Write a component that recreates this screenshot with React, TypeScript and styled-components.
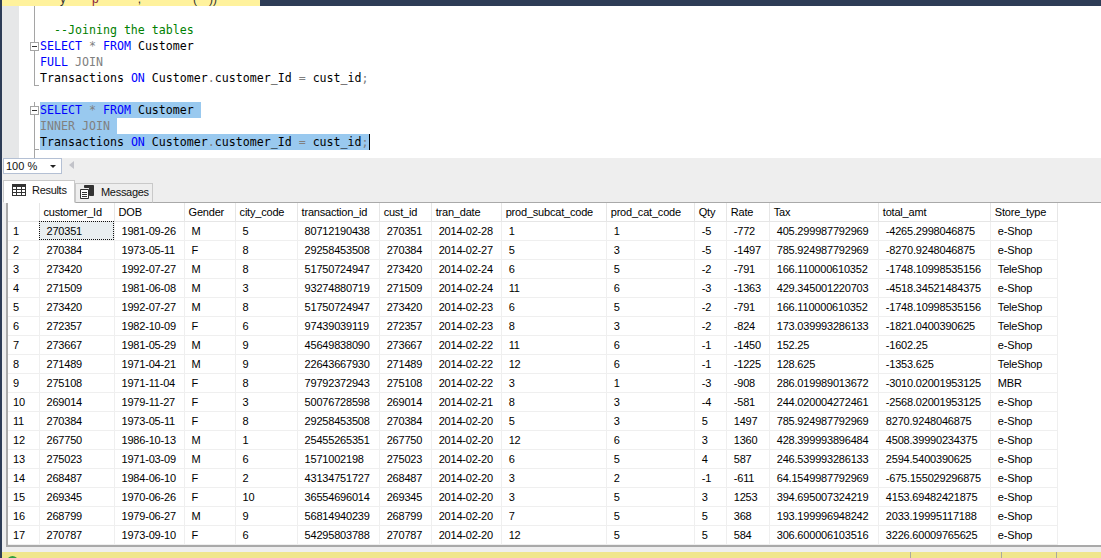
import React from 'react';
import styled, { createGlobalStyle } from 'styled-components';

const GlobalStyle = createGlobalStyle`
  html, body {
    margin: 0;
    padding: 0;
    overflow: hidden;
    background: #eeeeee;
  }
`;

const Page = styled.div`
  width: 1101px;
  height: 558px;
  display: flex;
  flex-direction: column;
  overflow: hidden;
  box-sizing: border-box;
  border-left: 2px solid #2d3c56;
  background: #eeeeee;
`;

const TitleStrip = styled.div`
  height: 6px;
  flex-shrink: 0;
  margin-left: -2px;
  display: flex;
  background: #2d3c56;
`;

const TitleTab = styled.div`
  width: 260px;
  height: 6px;
  overflow: hidden;
  background: #fff29d;
  display: flex;
  font: 12px/12px 'Liberation Sans', sans-serif;
  color: #333;
`;

const TitleGlyph = styled.span<{ $left: number; $color?: string }>`
  margin-left: ${p => p.$left}px;
  margin-top: -7px;
  color: ${p => p.$color || '#333'};
`;

const Editor = styled.div`
  height: 152px;
  flex-shrink: 0;
  display: flex;
  background: white;
`;

const Gutter = styled.div`
  width: 17px;
  flex-shrink: 0;
  background: #e6e7e8;
`;

const CodeArea = styled.div`
  flex: 1;
  font: 11.62px/16px 'DejaVu Sans Mono', monospace;
  color: #000;
`;

const CodeLine = styled.div<{ $height?: number }>`
  height: ${p => p.$height || 16}px;
  display: flex;
  white-space: pre;
`;

const CodeText = styled.span`
  display: block;
  height: 16px;
`;

const FoldCell = styled.div<{ $hidden?: boolean; $tick?: boolean }>`
  width: 21px;
  flex-shrink: 0;
  position: relative;
  &::before {
    content: '';
    display: ${p => (p.$hidden ? 'none' : 'block')};
    position: absolute;
    left: 15px;
    top: 0;
    bottom: 0;
    width: 1px;
    background: #a5a5a5;
  }
  &::after {
    content: '';
    display: ${p => (p.$tick ? 'block' : 'none')};
    position: absolute;
    left: 15px;
    bottom: 0;
    width: 5px;
    height: 1px;
    background: #a5a5a5;
  }
`;

const FoldBox = styled.span`
  position: absolute;
  z-index: 1;
  left: 11px;
  top: 4px;
  width: 7px;
  height: 7px;
  border: 1px solid #a5a5a5;
  background: white;
  &::after {
    content: '';
    position: absolute;
    left: 1px;
    top: 3px;
    width: 5px;
    height: 1px;
    background: #333;
  }
`;

const Selected = styled(CodeText)`
  background: #99c9ef;
`;

const Token = styled.span<{ $kind: 'keyword' | 'muted' | 'comment' }>`
  color: ${p =>
    p.$kind === 'keyword' ? '#0000ff' : p.$kind === 'comment' ? '#008000' : '#808080'};
`;

const Caret = styled.span`
  display: block;
  width: 1px;
  height: 16px;
  background: #000;
`;

const ZoomBar = styled.div`
  height: 17px;
  flex-shrink: 0;
  display: flex;
  align-items: flex-start;
  padding-left: 1px;
  background: #eeeeee;
`;

const ZoomCombo = styled.div`
  width: 59px;
  height: 16px;
  box-sizing: border-box;
  border: 1px solid #b4c0d4;
  background: white;
  display: flex;
  align-items: center;
  justify-content: space-between;
  padding: 0 5px 0 2px;
  font: 11px 'Liberation Sans', sans-serif;
  color: #111;
`;

const ComboArrow = styled.span`
  width: 0;
  height: 0;
  border-left: 3px solid transparent;
  border-right: 3px solid transparent;
  border-top: 3px solid #222;
`;

const ScrollArrow = styled.span`
  width: 0;
  height: 0;
  margin: 3px 0 0 7px;
  border-top: 4px solid transparent;
  border-bottom: 4px solid transparent;
  border-right: 5px solid #c2c3c9;
`;

const TabStrip = styled.div`
  height: 28px;
  flex-shrink: 0;
  display: flex;
  align-items: flex-end;
  padding-left: 1px;
  margin-bottom: -1px;
  position: relative;
  z-index: 1;
`;

const Tab = styled.div<{ $active?: boolean }>`
  height: ${p => (p.$active ? 23 : 20)}px;
  width: ${p => (p.$active ? 72 : 78)}px;
  box-sizing: border-box;
  display: flex;
  align-items: center;
  gap: 6px;
  padding: 0 0 3px ${p => (p.$active ? 8 : 4)}px;
  border: 1px solid #c9c9c9;
  border-bottom: ${p => (p.$active ? '1px solid white' : '1px solid #a9a9a9')};
  background: ${p => (p.$active ? 'white' : '#eeeeee')};
  font: 11px 'Liberation Sans', sans-serif;
  letter-spacing: -0.3px;
  color: #111;
`;

const GridFrame = styled.div`
  height: 345px;
  flex-shrink: 0;
  margin-left: 4px;
  box-sizing: border-box;
  border-top: 1px solid #a9a9a9;
  border-left: 2px solid #a9a9a9;
  border-bottom: 2px solid #a9a9a9;
  background: white;
  overflow: hidden;
`;

const Table = styled.table`
  table-layout: fixed;
  border-collapse: collapse;
  width: 1050px;
  font: 11px 'Liberation Sans', sans-serif;
  letter-spacing: -0.2px;
  color: #000;
`;

const Col = styled.col<{ $width: number }>`
  width: ${p => p.$width}px;
`;

const HeadCell = styled.th`
  height: 18px;
  padding: 0 0 0 4px;
  box-sizing: border-box;
  border-right: 1px solid #e6e6e6;
  border-bottom: 1px solid #e6e6e6;
  text-align: left;
  font-weight: 400;
  white-space: nowrap;
  overflow: hidden;
`;

const Cell = styled.td<{ $focused?: boolean }>`
  height: 19px;
  padding: 0 0 0 7px;
  box-sizing: border-box;
  border-right: 1px solid #efefef;
  border-bottom: 1px solid #efefef;
  white-space: nowrap;
  overflow: hidden;
  background: ${p => (p.$focused ? '#e9eef0' : 'white')};
  outline: ${p => (p.$focused ? '1px dotted #111' : 'none')};
  outline-offset: -1px;
`;

const RowNumber = styled(Cell)`
  padding-left: 5px;
`;

const StatusGap = styled.div`
  height: 5px;
  flex-shrink: 0;
`;

const StatusBar = styled.div`
  flex: 1;
  margin-left: -2px;
  display: flex;
  overflow: hidden;
  background: #f0e68c;
`;

const StatusSection = styled.div<{ $width: number }>`
  width: ${p => p.$width}px;
  flex-shrink: 0;
  box-sizing: border-box;
  border-right: 1px solid #a9a7a0;
  padding: 4px 0 0 7px;
`;

const StatusDot = styled.span`
  display: block;
  width: 11px;
  height: 11px;
  border-radius: 50%;
  background: #2f9e3f;
`;

const columns = [
  ['', 31],
  ['customer_Id', 75],
  ['DOB', 70],
  ['Gender', 51],
  ['city_code', 62],
  ['transaction_id', 82],
  ['cust_id', 52],
  ['tran_date', 70],
  ['prod_subcat_code', 105],
  ['prod_cat_code', 88],
  ['Qty', 32],
  ['Rate', 43],
  ['Tax', 109],
  ['total_amt', 112],
  ['Store_type', 67],
] as const;

const rows = [
  '270351 1981-09-26 M 5 80712190438 270351 2014-02-28 1 1 -5 -772 405.299987792969 -4265.2998046875 e-Shop',
  '270384 1973-05-11 F 8 29258453508 270384 2014-02-27 5 3 -5 -1497 785.924987792969 -8270.9248046875 e-Shop',
  '273420 1992-07-27 M 8 51750724947 273420 2014-02-24 6 5 -2 -791 166.110000610352 -1748.10998535156 TeleShop',
  '271509 1981-06-08 M 3 93274880719 271509 2014-02-24 11 6 -3 -1363 429.345001220703 -4518.34521484375 e-Shop',
  '273420 1992-07-27 M 8 51750724947 273420 2014-02-23 6 5 -2 -791 166.110000610352 -1748.10998535156 TeleShop',
  '272357 1982-10-09 F 6 97439039119 272357 2014-02-23 8 3 -2 -824 173.039993286133 -1821.0400390625 TeleShop',
  '273667 1981-05-29 M 9 45649838090 273667 2014-02-22 11 6 -1 -1450 152.25 -1602.25 e-Shop',
  '271489 1971-04-21 M 9 22643667930 271489 2014-02-22 12 6 -1 -1225 128.625 -1353.625 TeleShop',
  '275108 1971-11-04 F 8 79792372943 275108 2014-02-22 3 1 -3 -908 286.019989013672 -3010.02001953125 MBR',
  '269014 1979-11-27 F 3 50076728598 269014 2014-02-21 8 3 -4 -581 244.020004272461 -2568.02001953125 e-Shop',
  '270384 1973-05-11 F 8 29258453508 270384 2014-02-20 5 3 5 1497 785.924987792969 8270.9248046875 e-Shop',
  '267750 1986-10-13 M 1 25455265351 267750 2014-02-20 12 6 3 1360 428.399993896484 4508.39990234375 e-Shop',
  '275023 1971-03-09 M 6 1571002198 275023 2014-02-20 6 5 4 587 246.539993286133 2594.5400390625 e-Shop',
  '268487 1984-06-10 F 2 43134751727 268487 2014-02-20 3 2 -1 -611 64.1549987792969 -675.155029296875 e-Shop',
  '269345 1970-06-26 F 10 36554696014 269345 2014-02-20 3 5 3 1253 394.695007324219 4153.69482421875 e-Shop',
  '268799 1979-06-27 M 9 56814940239 268799 2014-02-20 7 5 5 368 193.199996948242 2033.19995117188 e-Shop',
  '270787 1973-09-10 F 6 54295803788 270787 2014-02-20 12 5 5 584 306.600006103516 3226.60009765625 e-Shop',
].map(row => row.split(' '));

const ResultsIcon = () => (
  <svg width="14" height="12" viewBox="0 0 14 12" fill="none" stroke="#333" strokeWidth="1">
    <rect x="0.5" y="0.5" width="13" height="11" />
    <path d="M0.5 1.5H13.5M0.5 2.5H13.5M0.5 5.5H13.5M0.5 8.5H13.5M4.5 2.5V11.5M9.5 2.5V11.5" />
  </svg>
);

const MessagesIcon = () => (
  <svg width="15" height="14" viewBox="0 0 15 14" fill="none" stroke="#333" strokeWidth="1">
    <path d="M0.5 4.5H8.5V13.5H0.5Z" fill="white" />
    <path d="M2 7.5H7M2 9.5H7M2 11.5H7" />
    <path d="M9.5 10.5V2.5H4.5V0.5H13.5V10.5Z" fill="#333" />
    <path d="M8 8.5H10" />
  </svg>
);

const FoldLine = ({ children, box, tick, hidden }: any) => (
  <CodeLine>
    <FoldCell $tick={tick} $hidden={hidden}>
      {box && <FoldBox />}
    </FoldCell>
    {children}
  </CodeLine>
);

export default function App() {
  return (
    <Page>
      <GlobalStyle />
      <TitleStrip>
        <TitleTab>
          <TitleGlyph $left={60}>y</TitleGlyph>
          <TitleGlyph $left={26} $color="#8a1c3c">
            p
          </TitleGlyph>
          <TitleGlyph $left={39}>,</TitleGlyph>
          <TitleGlyph $left={52}>(</TitleGlyph>
          <TitleGlyph $left={12}>))</TitleGlyph>
        </TitleTab>
      </TitleStrip>

      <Editor>
        <Gutter />
        <CodeArea>
          <FoldLine />
          <FoldLine>
            <CodeText>
              {'  '}
              <Token $kind="comment">--Joining the tables</Token>
            </CodeText>
          </FoldLine>
          <FoldLine box>
            <CodeText>
              <Token $kind="keyword">SELECT</Token> <Token $kind="muted">*</Token>{' '}
              <Token $kind="keyword">FROM</Token> Customer
            </CodeText>
          </FoldLine>
          <FoldLine>
            <CodeText>
              <Token $kind="keyword">FULL</Token> <Token $kind="muted">JOIN</Token>
            </CodeText>
          </FoldLine>
          <FoldLine tick>
            <CodeText>
              Transactions <Token $kind="keyword">ON</Token> Customer
              <Token $kind="muted">.</Token>customer_Id <Token $kind="muted">=</Token> cust_id
              <Token $kind="muted">;</Token>
            </CodeText>
          </FoldLine>
          <FoldLine hidden />
          <FoldLine box>
            <Selected>
              <Token $kind="keyword">SELECT</Token> <Token $kind="muted">*</Token>{' '}
              <Token $kind="keyword">FROM</Token> Customer{' '}
            </Selected>
          </FoldLine>
          <FoldLine>
            <Selected>
              <Token $kind="muted">INNER JOIN</Token>{' '}
            </Selected>
          </FoldLine>
          <FoldLine tick>
            <Selected>
              Transactions <Token $kind="keyword">ON</Token> Customer
              <Token $kind="muted">.</Token>customer_Id <Token $kind="muted">=</Token> cust_id
              <Token $kind="muted">;</Token>
            </Selected>
            <Caret />
          </FoldLine>
          <CodeLine $height={8}>
            <FoldCell />
          </CodeLine>
        </CodeArea>
      </Editor>

      <ZoomBar>
        <ZoomCombo>
          100 %
          <ComboArrow />
        </ZoomCombo>
        <ScrollArrow />
      </ZoomBar>

      <TabStrip>
        <Tab $active>
          <ResultsIcon />
          Results
        </Tab>
        <Tab>
          <MessagesIcon />
          Messages
        </Tab>
      </TabStrip>

      <GridFrame>
        <Table>
          <colgroup>
            {columns.map(([name, width]) => (
              <Col key={name} $width={width} />
            ))}
          </colgroup>
          <thead>
            <tr>
              {columns.map(([name]) => (
                <HeadCell key={name}>{name}</HeadCell>
              ))}
            </tr>
          </thead>
          <tbody>
            {rows.map((row, index) => (
              <tr key={index}>
                <RowNumber>{index + 1}</RowNumber>
                {row.map((value, cellIndex) => (
                  <Cell key={cellIndex} $focused={index === 0 && cellIndex === 0}>
                    {value}
                  </Cell>
                ))}
              </tr>
            ))}
          </tbody>
        </Table>
      </GridFrame>

      <StatusGap />
      <StatusBar>
        <StatusSection $width={911}>
          <StatusDot />
        </StatusSection>
        <StatusSection $width={91} />
        <StatusSection $width={55} />
      </StatusBar>
    </Page>
  );
}
